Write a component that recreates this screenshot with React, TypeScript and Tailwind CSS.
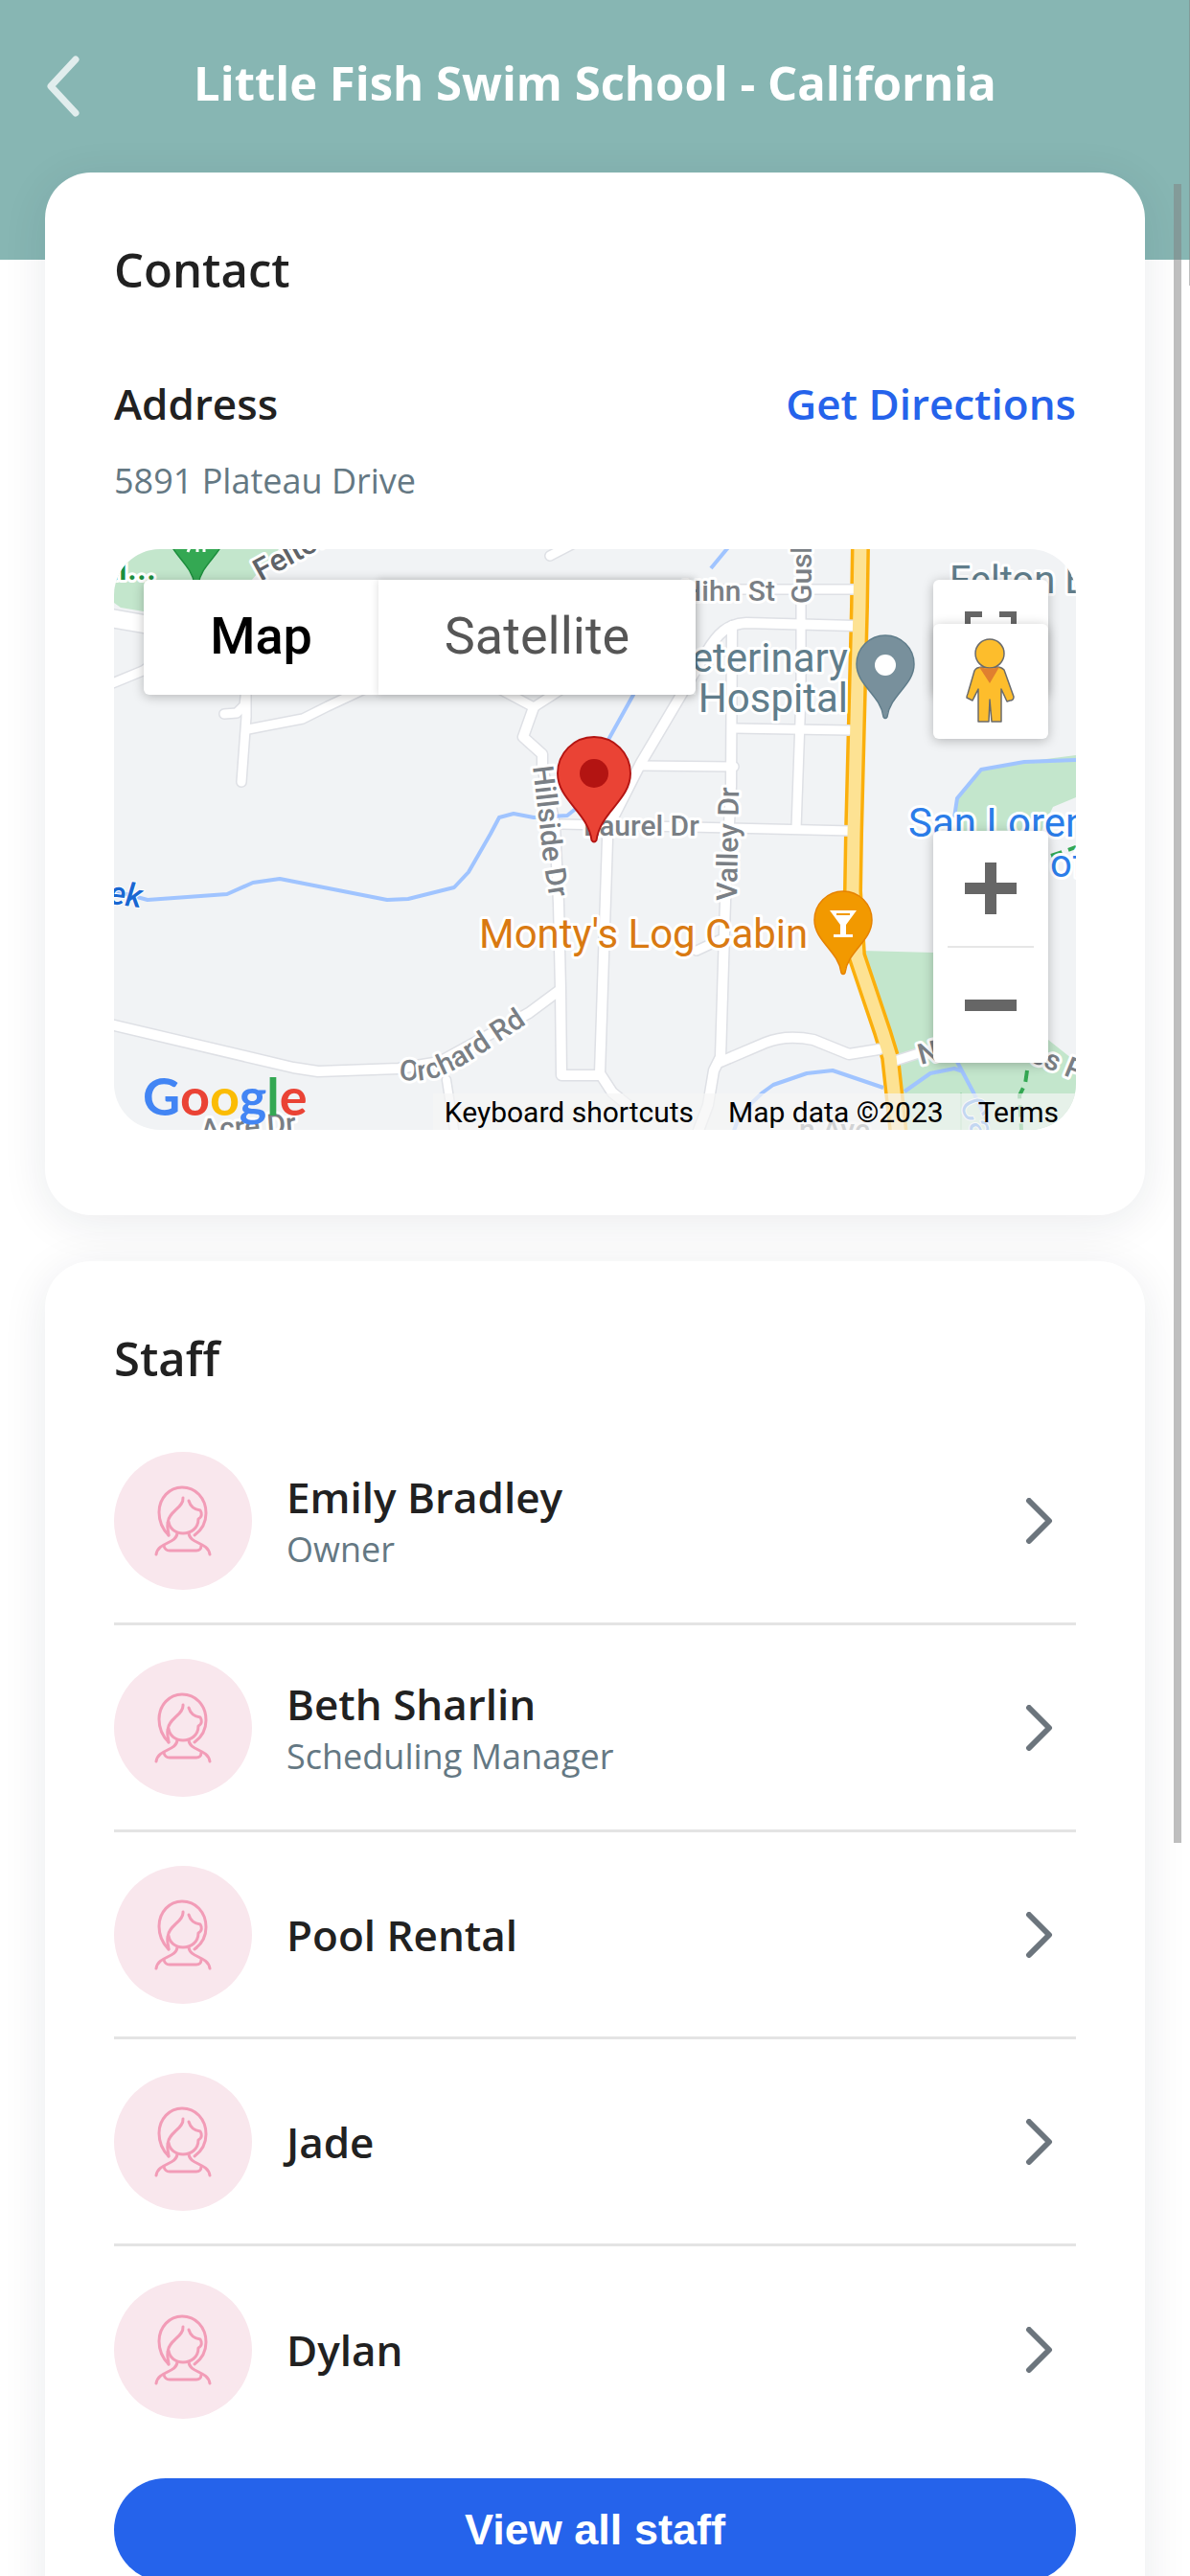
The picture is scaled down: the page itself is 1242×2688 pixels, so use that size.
interface StaffMember {
  name: string
  role?: string
}

const staff: StaffMember[] = [
  { name: 'Emily Bradley', role: 'Owner' },
  { name: 'Beth Sharlin', role: 'Scheduling Manager' },
  { name: 'Pool Rental' },
  { name: 'Jade' },
  { name: 'Dylan' },
]

// [path, width] pairs, drawn twice: grey casing first, white on top
const roads: [string, number][] = [
  ['M-4 72L31 78L60 84', 18],
  ['M-4 141L30 127L45 117V60', 9],
  ['M115 172L128 171L136 163L138 145', 9],
  ['M138 145V175L133 243', 9],
  ['M140 188L197 177L223 164L270 142', 9],
  ['M395 142L438 165L480 138', 9],
  ['M438 165L427 196L447 214V227L460 287L464 370L466 460L467 549H507', 10],
  ['M455 7L480 -6', 9],
  ['M-4 496L187 541L213 545L297 542L340 535L433 484L464 461', 10],
  ['M347 554L356 612', 8],
  ['M516 290L515 303L507 547L520 567L536 580', 10],
  ['M467 287L600 290L770 294', 9],
  ['M773 80L660 77C640 78 630 88 618 108L550 223L516 290', 10],
  ['M550 226L647 227', 9],
  ['M645 80L644 247L638 367L633 530L626 544L620 580L608 612', 10],
  ['M717 20V150L712 292', 9],
  ['M600 42H773', 9],
  ['M647 187L767 189', 9],
  ['M608 419L636 406', 9],
  ['M633 535L680 515C700 507 720 510 730 512L767 527L798 522', 10],
  ['M815 534L840 526', 9],
]

function MapPin({ x, y, r, fill, stroke }: { x: number; y: number; r: number; fill: string; stroke: string }) {
  return (
    <g transform={`translate(${x} ${y}) scale(${r / 30})`}>
      <path
        d="M0 -30A30 30 0 0 1 30 0C30 22 5 32 2 55Q0 58 -2 55C-5 32 -30 22 -30 0A30 30 0 0 1 0 -30Z"
        fill={fill}
        stroke={stroke}
        strokeWidth="1.5"
      />
    </g>
  )
}

function MapDrawing() {
  return (
    <svg
      viewBox="0 0 1004 606"
      preserveAspectRatio="xMidYMid slice"
      className="block w-full h-[606px] font-['Roboto',sans-serif]"
      role="img"
      aria-label="Map of 5891 Plateau Drive"
    >
      <rect width="1004" height="606" fill="#f1f3f5" />

      {/* parks */}
      <g fill="#c3e6cc">
        <path d="M0 0H172L143 33L100 70L45 68L31 65L7 61L0 56Z" />
        <path d="M877 280L880 260L905 230L950 222L1004 215V259L980 269L965 300H890Z" />
        <path d="M780 419L855 421L900 460L965 504L1004 535V606H828L805 510Z" />
      </g>

      {/* highway casing */}
      <path
        d="M779 -4L778 60L772 297L771 357L775 424L802 504L810 530L819 612"
        fill="none"
        stroke="#fbaf0c"
        strokeWidth="20"
        strokeLinejoin="round"
      />

      {/* streets */}
      <g fill="none" strokeLinejoin="round" strokeLinecap="round">
        {roads.map(([d, w]) => (
          <path key={d} d={d} stroke="#dee0e5" strokeWidth={w + 3} />
        ))}
        {roads.map(([d, w]) => (
          <path key={d} d={d} stroke="#ffffff" strokeWidth={w} />
        ))}
      </g>
      <path
        d="M779 -4L778 60L772 297L771 357L775 424L802 504L810 530L819 612"
        fill="none"
        stroke="#fde293"
        strokeWidth="13"
        strokeLinejoin="round"
      />

      {/* creeks */}
      <g fill="none" stroke="#a0c4ff" strokeWidth="4" strokeLinejoin="round">
        <path d="M-2 356L35 366L118 360L145 348L173 344L285 366L307 365L355 353L370 337L393 297L402 280L417 276L438 280L473 278L483 270L517 197L542 152L575 80" />
        <path d="M623 20L642 -3" />
        <path d="M877 280L880 260L905 230L950 222L1004 220" />
        <path d="M647 607L653 590L677 567L688 559L723 547L750 544L803 562" />
        <path d="M825 566L852 547L877 542L886 545M880 535L897 567L913 600" />
      </g>
      <g fill="none" stroke="#34a853" strokeWidth="4" strokeDasharray="12 7">
        <path d="M953 544L951 558L945 570L947 606" />
        <path d="M978 320L1004 311" />
      </g>
      <path d="M884 567V606" stroke="#a5d9b3" strokeWidth="2" />

      {/* place and street names */}
      <g stroke="#ffffff" strokeWidth="6" strokeLinejoin="round" paintOrder="stroke" fontSize="30" fontWeight="500" fill="#7a7f85">
        <text transform="translate(153 34) rotate(-29)" fontSize="32" fill="#5f6368">Felton</text>
        <text x="44" y="32" textAnchor="end" fontSize="36" fill="#1e8e3e">al...</text>
        <path id="hillside" d="M437 227L444 287L448 324L456 375" fill="none" stroke="none" />
        <text>
          <textPath href="#hillside">Hillside Dr</textPath>
        </text>
        <text x="490" y="299">Laurel Dr</text>
        <text x="690" y="54" textAnchor="end">Hihn St</text>
        <text transform="translate(728 57) rotate(-90)">Gushee St</text>
        <text transform="translate(650 367) rotate(-89)">Valley Dr</text>
        <path id="orchard" d="M297 553C345 562 370 533 450 483" fill="none" stroke="none" />
        <text>
          <textPath href="#orchard">Orchard Rd</textPath>
        </text>
        <text transform="translate(91 616) rotate(-4)">Acre Dr</text>
        <text transform="translate(842 538) rotate(-15)">N</text>
        <text transform="translate(954 534) rotate(22)">es Park</text>
        <text x="715" y="616">n Ave</text>
        <text transform="translate(28 374) rotate(7)" textAnchor="end" fontSize="34" fontStyle="italic" fill="#1967d2" strokeWidth="2">Creek</text>
        <text transform="translate(882 578) rotate(68)" fontSize="36" fontWeight="400" fill="#4f8fe8" strokeWidth="2">Ca</text>
      </g>
      <g stroke="#ffffff" strokeWidth="6" strokeLinejoin="round" paintOrder="stroke" fontSize="40">
        <g fill="#607d8b">
          <text x="766" y="128" textAnchor="end" fontSize="42">Veterinary</text>
          <text x="766" y="170" textAnchor="end" fontSize="42">Hospital</text>
          <text x="872" y="46">Felton E</text>
        </g>
        <text x="381" y="416" fontSize="42" fill="#d97a12">Monty's Log Cabin</text>
        <text x="829" y="300" fontSize="42" fill="#2b7de9">San Lorenzo</text>
        <text x="977" y="342" fill="#2b7de9">of</text>
      </g>

      {/* pins */}
      <MapPin x={86} y={-18} r={30} fill="#34a853" stroke="#1e8e3e" />
      <path d="M77 3L80 -4M87 3V-4M94 3V-4" stroke="#ffffff" strokeWidth="3" />
      <MapPin x={805} y={120} r={30} fill="#78909c" stroke="#607d8b" />
      <circle cx="805" cy="121" r="11" fill="#ffffff" />
      <MapPin x={761} y={387} r={30} fill="#f29900" stroke="#e68200" />
      <path d="M747 377H775L764 392V402H771V405H751V402H758V392Z" fill="#ffffff" />
      <path d="M754 381H768" stroke="#f29900" strokeWidth="2" />
      <MapPin x={501} y={234} r={38} fill="#ea4335" stroke="#b31412" />
      <circle cx="501" cy="234" r="15" fill="#b31412" />
    </svg>
  )
}

function Pegman() {
  return (
    <svg viewBox="0 0 54 90" className="w-[54px] h-[90px]" aria-hidden="true">
      <g fill="#fdbd2c" stroke="#6b6b6b" strokeWidth="1.5" strokeLinejoin="round">
        <path d="M13 31Q16 30 20 30H34Q38 30 41 33L51 61Q51 65 47 65L44 66L38 53V87H28L26 64L25 87H14V53L8 65L2 62Q2 60 3 58L10 34Q11 32 13 31Z" />
        <circle cx="26" cy="16" r="15" />
      </g>
      <path d="M15 30Q26 33 36 30L26 47Z" fill="#e07f2f" />
    </svg>
  )
}

function AddressMap() {
  return (
    <div className="relative mt-[46px] overflow-hidden rounded-[48px]">
      <MapDrawing />

      <div className="absolute left-[31px] top-8 flex h-[120px] rounded-md bg-white font-['Roboto',sans-serif] text-[54px] shadow-[0_2px_12px_rgba(0,0,0,0.25)]">
        <button className="w-[245px] pb-1 font-medium text-black">Map</button>
        <button className="w-[331px] pb-1 text-[#565656] shadow-[0_0_8px_rgba(0,0,0,0.15)]">Satellite</button>
      </div>

      <button
        aria-label="Toggle fullscreen view"
        className="absolute right-[29px] top-8 flex h-[120px] w-[120px] items-center justify-center rounded-md bg-white shadow-[0_2px_12px_rgba(0,0,0,0.25)]"
      >
        <svg viewBox="0 0 54 54" className="w-[54px] h-[54px]" fill="none" stroke="#666666" strokeWidth="6">
          <path d="M3 18V3H18M36 3H51V18M51 36V51H36M18 51H3V36" />
        </svg>
      </button>
      <button
        aria-label="Drag Pegman onto the map"
        className="absolute right-[29px] top-[78px] flex h-[120px] w-[120px] items-center justify-center rounded-md bg-white shadow-[0_2px_12px_rgba(0,0,0,0.25)]"
      >
        <Pegman />
      </button>

      <div className="absolute right-[29px] top-[294px] flex w-[120px] flex-col items-center rounded-md bg-white shadow-[0_2px_12px_rgba(0,0,0,0.25)]">
        <button aria-label="Zoom in" className="flex h-[120px] w-full items-center justify-center">
          <svg viewBox="0 0 54 54" className="w-[54px] h-[54px]" stroke="#666666" strokeWidth="12">
            <path d="M0 27H54M27 0V54" />
          </svg>
        </button>
        <div className="h-[2px] w-[90px] bg-[#e6e6e6]" />
        <button aria-label="Zoom out" className="flex h-[120px] w-full items-center justify-center">
          <svg viewBox="0 0 54 54" className="w-[54px] h-[54px]" stroke="#666666" strokeWidth="12">
            <path d="M0 27H54" />
          </svg>
        </button>
      </div>

      <div className="absolute bottom-0 left-[30px] font-['Lato',sans-serif] text-[54px] font-bold leading-[70px] text-[#4285f4]">
        G<span className="text-[#ea4335]">o</span>
        <span className="text-[#fbbc04]">o</span>g<span className="text-[#34a853]">l</span>
        <span className="text-[#ea4335]">e</span>
      </div>

      <div className="absolute bottom-0 right-0 flex h-[38px] items-center gap-9 bg-[#f5f5f5]/70 pl-3 pr-[18px] font-['Roboto',sans-serif] text-[30px] text-black">
        <button>Keyboard shortcuts</button>
        <span>Map data ©2023</span>
        <a href="#terms">Terms</a>
      </div>
    </div>
  )
}

function Avatar() {
  return (
    <div className="flex h-36 w-36 shrink-0 items-center justify-center rounded-full bg-[#f9e7ed]">
      <svg
        viewBox="0 0 104 104"
        className="h-[104px] w-[104px]"
        fill="none"
        stroke="#f29cb7"
        strokeWidth="3"
        strokeLinecap="round"
        strokeLinejoin="round"
        aria-hidden="true"
      >
        <path d="M37 67C30 60 27 52 27 43C27 28 38 17 51 17C65 17 76 28 76 44C76 54 71 62 64 67" />
        <path d="M52 28C53 38 37 42 36 54C35 60 37 63 37 67" />
        <path d="M58 31C60 38 64 40 70 41C72 44 72 48 68 50C68 60 60 65 52 65C44 65 38 60 37 53" />
        <path d="M46 65C45 76 26 74 24 87M58 65C59 76 78 74 80 87" />
        <path d="M32 78C33 82 35 83 38 83H66C69 83 71 81 71 78" />
      </svg>
    </div>
  )
}

function StaffRow({ member }: { member: StaffMember }) {
  return (
    <li className="border-b-[3px] border-[#e4e4e4] last:border-b-0 h-[216px]">
      <a href="#staff" className="flex h-full items-center gap-9">
        <Avatar />
        <div className="flex-1">
          <p className="text-[44px] font-semibold leading-[60px]">{member.name}</p>
          {member.role && <p className="text-[36px] leading-[50px] text-[#647883]">{member.role}</p>}
        </div>
        <svg viewBox="0 0 30 48" className="mr-6 h-12 w-[30px]" fill="none" stroke="#6c757d" strokeWidth="6" strokeLinecap="round" strokeLinejoin="round">
          <path d="M5 3L26 24L5 45" />
        </svg>
      </a>
    </li>
  )
}

export default function App() {
  return (
    <div className="relative h-screen overflow-hidden bg-white font-['Open_Sans',sans-serif] text-[#212121]">
      <div className="h-full overflow-y-auto [scrollbar-width:none]">
        <header className="h-[271px] bg-[#87b6b3]">
          <div className="relative flex h-[180px] items-center justify-center pb-2">
            <button aria-label="Back" className="absolute left-12 top-[58px]">
              <svg viewBox="0 0 36 64" className="h-16 w-9" fill="none" stroke="#e1eded" strokeWidth="7" strokeLinecap="round" strokeLinejoin="round">
                <path d="M31 4L5 32L31 60" />
              </svg>
            </button>
            <h1 className="text-[49px] font-bold leading-[60px] text-white">Little Fish Swim School - California</h1>
          </div>
        </header>

        <main className="relative -mt-[91px] flex flex-col gap-12 px-[47px] pb-12">
          <section className="rounded-[48px] bg-white px-[72px] pt-[71px] pb-[89px] shadow-[0_8px_48px_rgba(25,30,60,0.09)]">
            <h2 className="text-[49px] font-semibold leading-[60px]">Contact</h2>
            <div className="mt-20 flex items-center justify-between text-[44px] font-semibold leading-[60px]">
              <h3>Address</h3>
              <a href="#directions" className="text-[#2563eb]">
                Get Directions
              </a>
            </div>
            <p className="mt-[26px] text-[36px] leading-[50px] text-[#647883]">5891 Plateau Drive</p>
            <AddressMap />
          </section>

          <section className="rounded-[48px] bg-white px-[72px] pt-[71px] pb-[72px] shadow-[0_8px_48px_rgba(25,30,60,0.09)]">
            <h2 className="text-[49px] font-semibold leading-[60px]">Staff</h2>
            <ul className="mt-[33px]">
              {staff.map((member) => (
                <StaffRow key={member.name} member={member} />
              ))}
            </ul>
            <button className="mt-[26px] h-[108px] w-full rounded-full bg-[#2563eb] font-['Liberation_Sans',sans-serif] text-[45px] font-bold text-white">
              View all staff
            </button>
          </section>
        </main>
      </div>

      {/* scroll thumbs */}
      <div className="absolute right-[9px] top-48 h-[1731px] w-2 bg-[#808080]/50" />
      <div className="absolute right-0 top-0 h-[298px] w-px bg-[#808080]/50" />
    </div>
  )
}
